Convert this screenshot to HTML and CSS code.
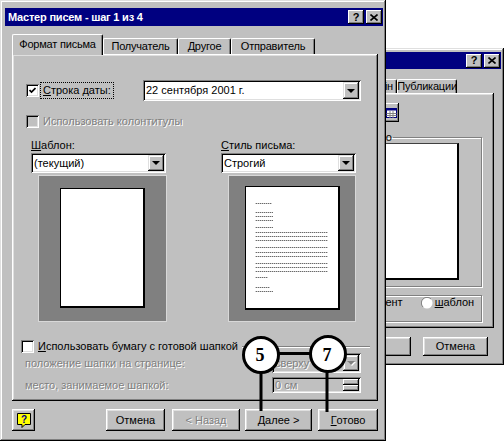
FILE: index.html
```html
<!DOCTYPE html>
<html lang="ru">
<head>
<meta charset="utf-8">
<title>Мастер писем</title>
<link rel="stylesheet" href="styles.css">
</head>
<body>
<div class="desk">

  <div class="win back">
    <div class="title small">
      <span class="ttext">Параметры</span>
      <div class="tbtns">
        <span class="tb">?</span>
        <span class="tb"><svg width="8" height="7" viewBox="0 0 8 7"><path d="M0.5 0.5L7.5 6.5M7.5 0.5L0.5 6.5" stroke="#000" stroke-width="1.6"/></svg></span>
      </div>
    </div>
    <div class="tabs btabs">
      <div class="tab bt1">Дизайн</div>
      <div class="tab bt2">Публикации</div>
    </div>
    <div class="bpanel">
      <div class="iconbtn"><svg width="11" height="10" viewBox="0 0 11 10"><rect x="0.5" y="0.5" width="10" height="9" fill="#fff" stroke="#000080"/><rect x="0.5" y="0.5" width="10" height="2" fill="#000080"/><path d="M0.5 5.5H10.5M0.5 7.5H10.5M4 3V10M7 3V10" stroke="#808080" stroke-width="1"/></svg></div>
      <fieldset class="gb gb1">
        <legend class="gbl">Выбрано</legend>
        <div class="bprev"></div>
      </fieldset>
      <fieldset class="gb gb2">
        <span class="doc">документ</span>
        <svg class="radio" width="12" height="12" viewBox="0 0 12 12"><circle cx="6" cy="6" r="5.5" fill="#fff"/><path d="M10 2A5.5 5.5 0 0 0 2 10" stroke="#808080" fill="none"/></svg>
        <span class="rl"><u>ш</u>аблон</span>
      </fieldset>
    </div>
    <div class="bbtns">
      <div class="btn bok">ОК</div>
      <div class="btn bcan">Отмена</div>
    </div>
  </div>

  <div class="win main">
    <div class="title">
      <span class="ttext">Мастер писем - шаг 1 из 4</span>
      <div class="tbtns">
        <span class="tb">?</span>
        <span class="tb"><svg width="8" height="7" viewBox="0 0 8 7"><path d="M0.5 0.5L7.5 6.5M7.5 0.5L0.5 6.5" stroke="#000" stroke-width="1.6"/></svg></span>
      </div>
    </div>

    <div class="tabs mtabs">
      <div class="tab sel t1">Формат письма</div>
      <div class="tab t2">Получатель</div>
      <div class="tab t3">Другое</div>
      <div class="tab t4">Отправитель</div>
    </div>

    <div class="panel">
      <div class="row1">
        <div class="ck">
          <span class="chk"><svg width="7" height="7" viewBox="0 0 7 7"><path d="M0.5 3L2.5 5L6.5 1" stroke="#000" stroke-width="1.7" fill="none"/></svg></span>
          <span class="focus"><u>С</u>трока даты:</span>
        </div>
        <div class="combo date">
          <span class="val">22 сентября 2001 г.</span>
          <span class="drop"><span class="arrow"></span></span>
        </div>
      </div>

      <div class="row2">
        <div class="ck">
          <span class="chk dis"></span>
          <span class="dtext lbl2">Использовать колонтитулы</span>
        </div>
      </div>

      <div class="cols">
        <div class="col col1">
          <span class="clabel"><u>Ш</u>аблон:</span>
          <div class="combo small">
            <span class="val">(текущий)</span>
            <span class="drop"><span class="arrow"></span></span>
          </div>
          <div class="preview pv1"><div class="page"></div></div>
        </div>
        <div class="col col2">
          <span class="clabel"><u>С</u>тиль письма:</span>
          <div class="combo small">
            <span class="val">Строгий</span>
            <span class="drop"><span class="arrow"></span></span>
          </div>
          <div class="preview pv2"><div class="page">
            <svg class="lines" width="92" height="121" viewBox="0 0 92 121">
              <defs>
                <pattern id="dots" width="2" height="1" patternUnits="userSpaceOnUse">
                  <rect width="1" height="1" fill="#6a6a6a"/>
                  <rect x="1" width="1" height="1" fill="#c8c8c8"/>
                </pattern>
              </defs>
              <g fill="url(#dots)">
                <rect x="9" y="16" width="17" height="1"/>
                <rect x="9" y="25" width="18" height="1"/>
                <rect x="9" y="29" width="18" height="1"/>
                <rect x="9" y="33" width="18" height="1"/>
                <rect x="9" y="40" width="18" height="1"/>
                <rect x="9" y="45" width="73" height="1"/>
                <rect x="9" y="49" width="73" height="1"/>
                <rect x="9" y="53" width="73" height="1"/>
                <rect x="9" y="60" width="73" height="1"/>
                <rect x="9" y="65" width="73" height="1"/>
                <rect x="9" y="69" width="73" height="1"/>
                <rect x="9" y="76" width="73" height="1"/>
                <rect x="9" y="80" width="73" height="1"/>
                <rect x="9" y="84" width="73" height="1"/>
                <rect x="9" y="90" width="13" height="1"/>
                <rect x="9" y="100" width="15" height="1"/>
                <rect x="9" y="104" width="18" height="1"/>
              </g>
            </svg>
          </div></div>
        </div>
      </div>

      <div class="hdr">
        <span class="chk"></span>
        <span class="hlbl"><u>И</u>спользовать бумагу с готовой шапкой</span>
        <span class="etch"></span>
      </div>

      <div class="row7">
        <span class="dtext dl">положение шапки на странице:</span>
        <div class="combo dis sm">
          <span class="val dtext">сверху</span>
          <span class="drop"><span class="arrow darr"></span></span>
        </div>
      </div>

      <div class="row8">
        <span class="dtext dl">место, занимаемое шапкой:</span>
        <div class="combo dis spin">
          <span class="val dtext">0 см</span>
          <span class="spins"><span class="sp"></span><span class="sp"></span></span>
        </div>
      </div>
    </div>

    <div class="btnrow">
      <div class="btn help"><svg width="14" height="15" viewBox="0 0 14 15"><path d="M0.5 0.5H13.5V11.5H8L5 14.5V11.5H0.5Z" fill="#ffff00" stroke="#000"/><text x="7" y="10" font-family="Liberation Sans, sans-serif" font-weight="bold" font-size="10" text-anchor="middle" fill="#000080">?</text></svg></div>
      <div class="btn b-cancel">Отмена</div>
      <div class="btn b-back dtext">&lt; Назад</div>
      <div class="btn b-next"><u>Д</u>алее &gt;</div>
      <div class="btn b-done"><u>Г</u>отово</div>
    </div>
  </div>

  <svg class="callouts" width="504" height="441" viewBox="0 0 504 441">
    <g stroke="#000" fill="none">
      <line x1="279" y1="353" x2="310" y2="353" stroke-width="2"/>
      <line x1="261" y1="372" x2="261" y2="411" stroke-width="3"/>
      <line x1="327" y1="371" x2="327" y2="412" stroke-width="3"/>
    </g>
    <circle cx="261" cy="355" r="17.5" fill="#fff" stroke="#000" stroke-width="3"/>
    <circle cx="328" cy="354" r="17.5" fill="#fff" stroke="#000" stroke-width="3"/>
    <text x="260" y="361" class="cnum" text-anchor="middle">5</text>
    <text x="327" y="361" class="cnum" text-anchor="middle">7</text>
  </svg>

</div>
</body>
</html>
```

FILE: styles.css
```css
* { box-sizing: border-box; }
html, body { margin: 0; padding: 0; background: #fff; }
body {
  font-family: "Liberation Sans", Arial, sans-serif;
  font-size: 11px;
  line-height: 13px;
  color: #000;
}
u { text-decoration: underline; text-underline-offset: 1px; }

.desk { position: relative; width: 504px; height: 441px; overflow: hidden; }

.win {
  position: absolute;
  background: #c0c0c0;
  box-shadow: inset -1px -1px #000, inset 1px 1px #dfdfdf, inset -2px -2px #808080, inset 2px 2px #fff;
  display: flex;
  flex-direction: column;
}
.main { left: 0; top: 0; width: 386px; height: 441px; padding: 8px 3px 0 5px; z-index: 2; }
.back { left: 250px; top: 48px; width: 254px; height: 317px; padding: 4px 3px 0 3px; z-index: 1; }

.title {
  flex: none;
  height: 18px;
  background: #000080;
  color: #fff;
  font-weight: bold;
  display: flex;
  align-items: center;
  padding: 0 1px 0 3px;
}
.title.small { height: 17px; }
.ttext { flex: 1; white-space: nowrap; overflow: hidden; letter-spacing: -0.2px; }
.tbtns { display: flex; gap: 2px; }
.tb {
  width: 16px; height: 14px;
  background: #c0c0c0;
  color: #000;
  font-size: 11px;
  font-weight: bold;
  display: flex; align-items: center; justify-content: center;
  box-shadow: inset -1px -1px #000, inset 1px 1px #fff, inset -2px -2px #808080;
}

/* tabs */
.tabs { flex: none; display: flex; align-items: flex-end; position: relative; z-index: 1; }
.mtabs { height: 20px; margin: 8px 0 0 7px; }
.tab {
  height: 16px;
  display: flex; align-items: center; justify-content: center;
  background: #c0c0c0;
  border-top: 1px solid #fff;
  border-left: 1px solid #fff;
  border-right: 1px solid #000;
  box-shadow: inset -1px 0 #808080;
  border-radius: 2px 2px 0 0;
  white-space: nowrap;
  letter-spacing: -0.2px;
}
.tab.sel { height: 21px; margin-bottom: -1px; padding-bottom: 2px; }
.t1 { width: 91px; }
.t2 { width: 75px; }
.t3 { width: 53px; }
.t4 { width: 84px; }

.panel {
  flex: none;
  margin-left: 7px;
  width: 366px;
  height: 347px;
  display: flex;
  flex-direction: column;
  box-shadow: inset -1px -1px #000, inset 1px 1px #fff, inset -2px -2px #808080, inset 2px 2px #dfdfdf;
}

.chk {
  flex: none;
  width: 13px; height: 13px;
  background: #fff;
  display: flex; align-items: center; justify-content: center;
  box-shadow: inset 1px 1px #808080, inset -1px -1px #fff, inset 2px 2px #000, inset -2px -2px #dfdfdf;
}
.chk.dis { background: #c0c0c0; }
.ck { display: flex; align-items: center; margin-left: 14px; }
.focus { margin-left: 2px; padding: 1px 2px; outline: 1px dotted #000; outline-offset: 0; }

.dtext { color: #808080; text-shadow: 1px 1px 0 #fff; }

.row1 { display: flex; align-items: center; height: 21px; margin-top: 26px; }
.row2 { display: flex; align-items: center; height: 13px; margin-top: 14px; }
.lbl2 { margin-left: 4px; }

.combo {
  flex: none;
  background: #fff;
  display: flex;
  align-items: stretch;
  padding: 2px;
  box-shadow: inset 1px 1px #808080, inset -1px -1px #fff, inset 2px 2px #000, inset -2px -2px #dfdfdf;
}
.combo .val { flex: 1; display: flex; align-items: center; padding-left: 1px; white-space: nowrap; overflow: hidden; }
.combo.date { width: 218px; height: 21px; margin-left: auto; margin-right: 17px; }
.combo.small { height: 20px; margin-top: 1px; width: 135px; }
.drop {
  flex: none;
  width: 16px;
  background: #c0c0c0;
  display: flex; align-items: center; justify-content: center;
  box-shadow: inset -1px -1px #000, inset 1px 1px #dfdfdf, inset -2px -2px #808080, inset 2px 2px #fff;
}
.arrow {
  width: 0; height: 0;
  border-left: 4px solid transparent;
  border-right: 4px solid transparent;
  border-top: 4px solid #000;
}
.arrow.darr { border-top-color: #808080; filter: drop-shadow(1px 1px 0 #fff); }

.cols { display: flex; margin-top: 11px; }
.col { width: 135px; display: flex; flex-direction: column; flex: none; }
.col1 { margin-left: 19px; }
.col2 { margin-left: 55px; }
.clabel { height: 13px; white-space: nowrap; }
.preview {
  margin-top: 2px;
  margin-left: 7px;
  height: 147px;
  background: #808080;
  border: 1px solid #d8d8d8;
}
.pv1 { width: 129px; padding: 12px 21px 13px 21px; }
.pv2 { width: 128px; padding: 10px 15px 11px 16px; }
.page {
  height: 100%;
  background: #fff;
  border: 1px solid #000;
  border-right-width: 2px;
  border-bottom-width: 2px;
  overflow: hidden;
}
.lines { display: block; }

.hdr { display: flex; align-items: center; height: 13px; margin-top: 18px; }
.hdr .chk { margin-left: 9px; }
.hlbl { margin-left: 4px; white-space: nowrap; }
.etch { flex: 1; height: 2px; margin: 0 8px 0 4px; border-top: 1px solid #808080; border-bottom: 1px solid #fff; }

.row7 { display: flex; align-items: center; height: 20px; }
.row8 { display: flex; align-items: center; height: 16px; margin-top: 4px; }
.dl { margin-left: 13px; white-space: nowrap; }
.combo.dis { background: #c0c0c0; width: 89px; margin-left: auto; margin-right: 17px; }
.combo.sm { height: 20px; }
.combo.spin { height: 16px; }
.spins { flex: none; width: 16px; display: flex; flex-direction: column; }
.sp {
  flex: 1;
  background: #c0c0c0;
  box-shadow: inset -1px -1px #000, inset 1px 1px #fff, inset -2px -2px #808080;
}

/* bottom buttons */
.btn {
  flex: none;
  height: 22px;
  background: #c0c0c0;
  display: flex; align-items: center; justify-content: center;
  white-space: nowrap;
  box-shadow: inset -1px -1px #000, inset 1px 1px #fff, inset -2px -2px #808080, inset 2px 2px #dfdfdf;
}
.btnrow { flex: none; display: flex; margin: 8px 0 0 7px; height: 22px; }
.help { width: 23px; }
.b-cancel { width: 59px; margin-left: 71px; }
.b-back { width: 68px; margin-left: 7px; }
.b-next { width: 67px; margin-left: 5px; }
.b-done { width: 60px; margin-left: 6px; }

/* back window */
.btabs { height: 14px; margin: 10px 0 0 77px; }
.btabs .tab { height: 14px; }
.bt1 { width: 67px; justify-content: flex-end; padding-right: 3px; }
.bt2 { width: 60px; }
.bpanel {
  flex: none;
  margin-left: 5px;
  width: 236px;
  height: 235px;
  display: flex;
  flex-direction: column;
  box-shadow: inset -1px -1px #000, inset 1px 1px #fff, inset -2px -2px #808080, inset 2px 2px #dfdfdf;
}
.iconbtn {
  flex: none;
  width: 16px; height: 19px;
  margin: 10px 0 0 125px;
  background: #c0c0c0;
  display: flex; align-items: center; justify-content: center;
  box-shadow: inset -1px -1px #000, inset 1px 1px #fff, inset -2px -2px #808080;
}
.gb {
  margin: 0 0 0 10px;
  padding: 0;
  width: 214px;
  border: 1px solid #808080;
  box-shadow: inset 1px 1px #fff, 1px 1px #fff;
  min-width: 0;
}
.gb1 { margin-top: 9px; height: 156px; }
.gbl { margin-left: 76px; padding: 0 1px; line-height: 12px; }
.bprev {
  margin: 0 0 0 40px;
  width: 150px;
  height: 137px;
  background: #fff;
  border: 1px solid #404040;
  border-right: 2px solid #000;
  border-bottom: 2px solid #000;
}
.gb2 { margin-top: 8px; height: 27px; display: flex; align-items: center; }
.doc { margin-left: 86px; }
.radio { margin-left: 18px; flex: none; }
.rl { margin-left: 2px; }
.bbtns { flex: none; display: flex; margin-top: 9px; }
.bbtns .btn { height: 19px; }
.bok { width: 75px; margin-left: 83px; }
.bcan { width: 65px; margin-left: 12px; }

/* callouts */
.callouts { position: absolute; left: 0; top: 0; pointer-events: none; z-index: 3; }
.cnum { font-family: "Liberation Serif", "Times New Roman", serif; font-weight: bold; font-size: 18px; }
```
